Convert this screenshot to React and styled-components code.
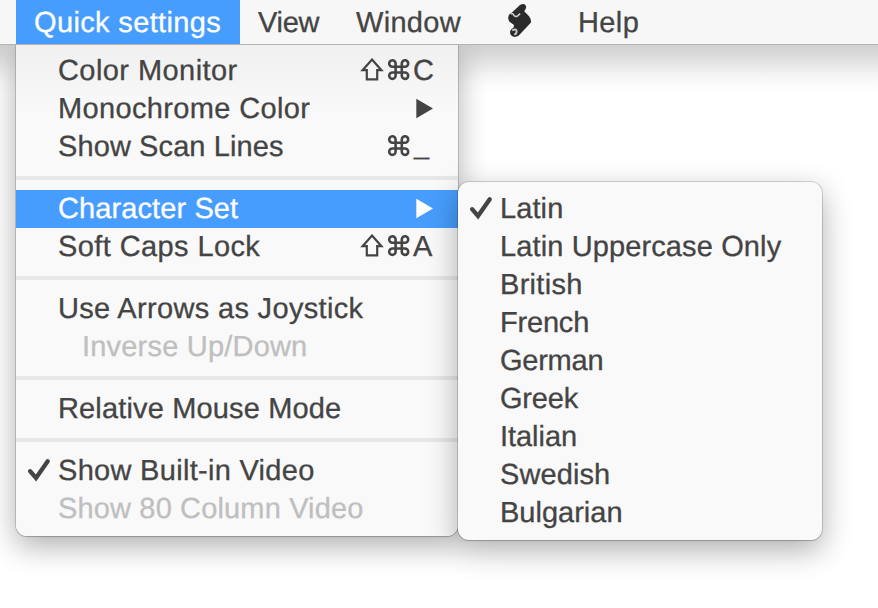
import React from "react";
import styled, { createGlobalStyle, css } from "styled-components";

const Global = createGlobalStyle`
  html, body { margin: 0; padding: 0; background: #fff; overflow: hidden; }
  * { box-sizing: border-box; }
`;

const Desktop = styled.main`
  width: 878px;
  height: 608px;
  overflow: hidden;
  background: linear-gradient(
    #fff 45px, #d1d1d1 45px, #d9d9d9 54px, #e6e6e6 64px, #f3f3f3 74px, #fbfbfb 83px, #fff 93px
  );
  font-family: "Liberation Sans", Arial, sans-serif;
  font-size: 29px;
  text-rendering: geometricPrecision;
  color: #444;
  -webkit-text-stroke: 0.3px currentColor;
  white-space: nowrap;
  cursor: default;
`;

const MenuBar = styled.nav`
  display: flex;
  height: 45px;
  padding-left: 16px;
  background: #f7f7f7;
  border-bottom: 1px solid #b4b4b4;
`;

const BarItem = styled.div`
  flex: none;
  width: ${(p) => p.$width}px;
  height: 44px;
  padding-left: ${(p) => p.$pad ?? 18}px;
  line-height: 46px;
  letter-spacing: ${(p) => p.$track}px;
  ${(p) => p.$active && css`background: #479dfd; color: #fff;`}
`;

const ScriptGlyph = styled.svg`
  display: block;
  width: 26px;
  height: 34px;
  margin-top: 3px;
`;

const Panel = styled.div`
  background: #f9f9f9;
  padding: 8px 0;
  border-radius: 11px;
  box-shadow: 0 0 0 1px rgba(0, 0, 0, 0.15), 0 1px 1px rgba(0, 0, 0, 0.12),
    0 10px 30px rgba(0, 0, 0, 0.32);
`;

const MainMenu = styled(Panel)`
  position: relative;
  width: 442px;
  margin-left: 16px;
  padding-top: 7px;
  border-radius: 0 0 11px 11px;
  background: linear-gradient(#f0f0f0, #f4f4f4 28px, #f9f9f9 64px);
  clip-path: inset(0 -500px -100px -100px);
`;

const SubMenu = styled(Panel)`
  position: absolute;
  left: 442px;
  top: 137px;
  width: 364px;
`;

const Row = styled.div`
  display: grid;
  grid-template-columns: 42px 1fr auto;
  height: 38px;
  line-height: 38px;
  padding-right: 22px;
  ${(p) => p.$disabled && css`color: #bfbfbf;`}
  ${(p) => p.$selected && css`background: #479dfd; color: #fff;`}
`;

const Mark = styled.span`
  display: flex;
  align-items: center;
  padding-left: 11px;
`;

const Label = styled.span`
  letter-spacing: ${(p) => p.$track}px;
  padding-left: ${(p) => (p.$indent ? 24 : 0)}px;
`;

const Shortcut = styled.span`
  display: flex;
  align-items: center;
  gap: 3px;
`;

const Key = styled.span`
  width: 23px;
  height: 38px;
  ${(p) => p.$low && css`padding-left: 1px; font-size: 27px; line-height: 35px;`}
`;

const Glyph = styled.svg`
  display: block;
  flex: none;
  fill: none;
  stroke: currentColor;
`;

const Divider = styled.div`
  height: 4px;
  margin: 10px 0;
  background: #e7e7e7;
`;

const Check = () => (
  <Glyph width="24" height="26" viewBox="0 0 24 26" strokeWidth="4.3" strokeLinecap="round" strokeLinejoin="miter">
    <path d="M3.1 13.2 L9 20 L20.7 3.2" />
  </Glyph>
);

const Shift = () => (
  <Glyph width="24" height="26" viewBox="0 0 24 26" strokeWidth="2.2">
    <path d="M12 1.6 L21.4 12.2 H17.2 V21.4 H6.8 V12.2 H2.6 Z" />
  </Glyph>
);

const Command = () => (
  <Glyph width="23" height="26" viewBox="0 0 23 26" strokeWidth="2.6">
    <path d="M8.6 8.7 H5.7 A3.2 3.2 0 1 1 8.6 5.5 V17.6 A3.2 3.2 0 1 1 5.7 14.5 H17.9 A3.2 3.2 0 1 1 14.8 17.6 V5.5 A3.2 3.2 0 1 1 17.9 8.7 Z" />
  </Glyph>
);

const Triangle = () => (
  <Glyph width="20" height="22" viewBox="0 0 20 22">
    <path d="M0.3 0.8 L17 10.6 L0.3 20.3 Z" fill="currentColor" stroke="none" />
  </Glyph>
);

const ScriptIcon = () => (
  <ScriptGlyph viewBox="0 0 26 34">
    <path d="M5.4 10 L14 2 Q18.6 -0.2 20 3 Q20.6 5.6 18.2 8.2 L20.4 10.4 Q26 15.6 24.8 19.8 L14.2 31 Q12 34.4 7.6 33.8 Q3.4 32.4 4.2 28 Q5.4 25.4 7.6 24.4 L8 22 L3.2 18.6 Q1.2 14.6 3.2 11.4 Z" fill="#2b2b2b" />
    <path d="M4.8 11.2 Q7 9.8 7.8 12.2 Q9.6 14.4 11.6 12.8 L14.2 10.6" fill="none" stroke="#d0d0d0" strokeWidth="1.5" />
    <path d="M6.2 27.4 Q10.4 25.2 10.6 28.2 Q10.6 31 8.2 31.6" fill="none" stroke="#c4c4c4" strokeWidth="2" />
  </ScriptGlyph>
);

const languages = [
  ["Latin", 0.1],
  ["Latin Uppercase Only", 0.12],
  ["British", 0.3],
  ["French", -0.2],
  ["German", -0.25],
  ["Greek", -0.2],
  ["Italian", -0.05],
  ["Swedish", 0.1],
  ["Bulgarian", 0],
];

function MenuRow({ text, track, checked, disabled, selected, indent, children }) {
  return (
    <Row $disabled={disabled} $selected={selected}>
      <Mark>{checked && <Check />}</Mark>
      <Label $track={track} $indent={indent}>{text}</Label>
      <Shortcut>{children}</Shortcut>
    </Row>
  );
}

export default function App() {
  return (
    <Desktop>
      <Global />
      <MenuBar>
        <BarItem $width={224} $track={0.36} $active>Quick settings</BarItem>
        <BarItem $width={99} $track={-0.3}>View</BarItem>
        <BarItem $width={142} $pad={17} $track={0.3}>Window</BarItem>
        <BarItem $width={79} $pad={25}><ScriptIcon /></BarItem>
        <BarItem $width={100} $pad={18} $track={0.4}>Help</BarItem>
      </MenuBar>
      <MainMenu>
        <MenuRow text="Color Monitor" track={0.43}><Shift /><Command /><Key>C</Key></MenuRow>
        <MenuRow text="Monochrome Color" track={0.35}><Triangle /></MenuRow>
        <MenuRow text="Show Scan Lines" track={0.1}><Command /><Key $low>_</Key></MenuRow>
        <Divider />
        <MenuRow text="Character Set" track={0.1} selected><Triangle /></MenuRow>
        <MenuRow text="Soft Caps Lock" track={0.4}><Shift /><Command /><Key>A</Key></MenuRow>
        <Divider />
        <MenuRow text="Use Arrows as Joystick" track={0.33} />
        <MenuRow text="Inverse Up/Down" track={0.2} disabled indent />
        <Divider />
        <MenuRow text="Relative Mouse Mode" track={0.15} />
        <Divider />
        <MenuRow text="Show Built-in Video" track={0.3} checked />
        <MenuRow text="Show 80 Column Video" track={0.15} disabled />
        <SubMenu>
          {languages.map(([name, track], i) => (
            <MenuRow key={name} text={name} track={track} checked={i === 0} />
          ))}
        </SubMenu>
      </MainMenu>
    </Desktop>
  );
}
